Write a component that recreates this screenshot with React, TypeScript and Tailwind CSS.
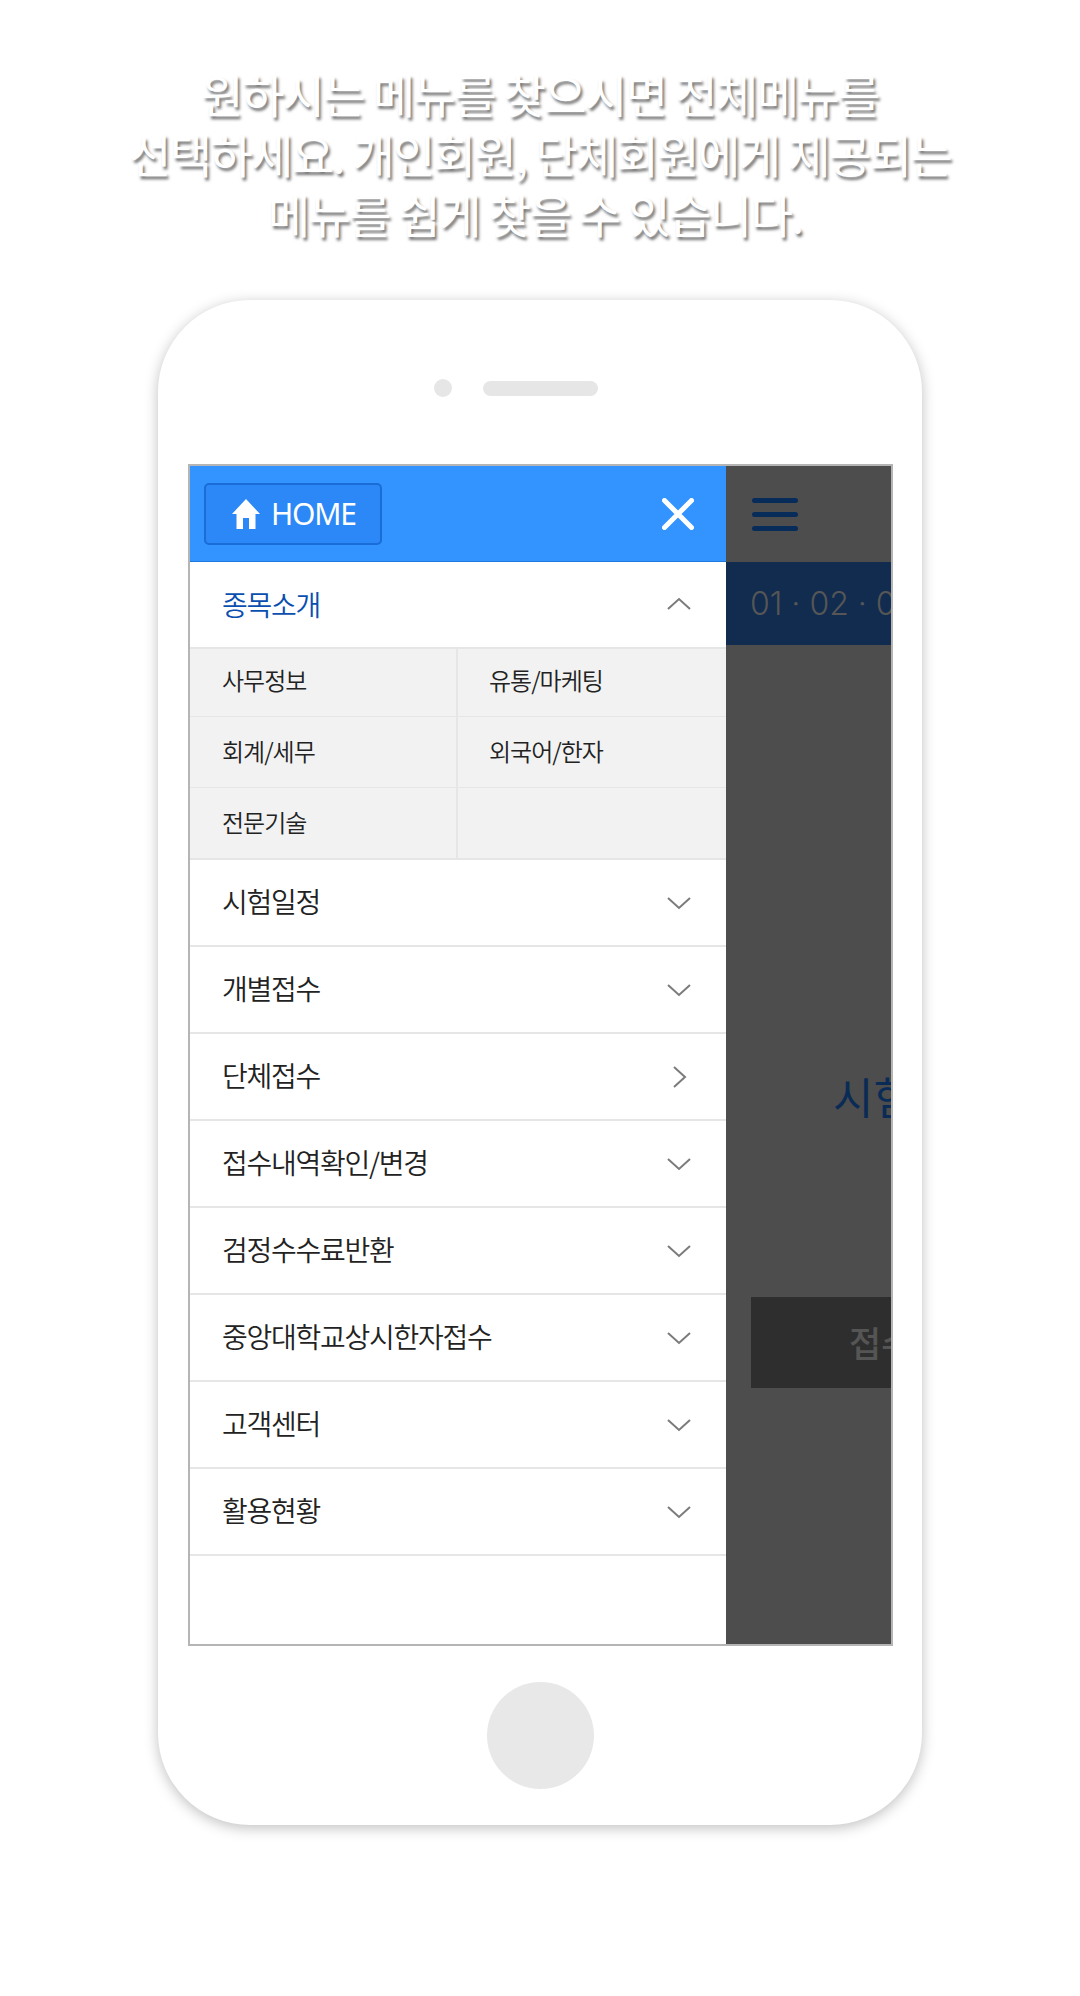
const FONT = "font-['Noto_Sans_CJK_KR','Noto_Sans',sans-serif]";

const MENU_ROWS = [
  { label: "시험일정", dir: "down" },
  { label: "개별접수", dir: "down" },
  { label: "단체접수", dir: "right" },
  { label: "접수내역확인/변경", dir: "down" },
  { label: "검정수수료반환", dir: "down" },
  { label: "중앙대학교상시한자접수", dir: "down" },
  { label: "고객센터", dir: "down" },
  { label: "활용현황", dir: "down" },
];

const SUB_ITEMS = ["사무정보", "유통/마케팅", "회계/세무", "외국어/한자", "전문기술", ""];

function Chevron({ dir }: { dir: string }) {
  const points = dir === "down" ? "1,1 12,11 23,1" : dir === "up" ? "1,11 12,1 23,11" : "7,-4 18,6 7,16";
  return (
    <svg width="24" height="12" viewBox="0 0 24 12" className="overflow-visible" fill="none" stroke="#7b7b7b" strokeWidth="2">
      <polyline points={points} />
    </svg>
  );
}

function HomeIcon() {
  return (
    <svg width="28" height="30" viewBox="0 0 28 30" fill="#fff">
      <path d="M14 0 L28 15 L23.5 15 L23.5 30 L17 30 L17 19 L11 19 L11 30 L4.5 30 L4.5 15 L0 15 Z" />
    </svg>
  );
}

function MenuRow({ label, dir }: { label: string; dir: string }) {
  return (
    <div className="flex h-[87px] items-center justify-between border-b-2 border-[#e6e6e6] pl-8 pr-[35px]">
      <span className="pb-[3px] text-[28px] font-[350] tracking-[-1.25px] text-[#222]">{label}</span>
      <Chevron dir={dir} />
    </div>
  );
}

function Menu() {
  return (
    <div className="flex w-[536px] shrink-0 flex-col bg-white">
      <div className="flex h-[96px] items-center justify-between border-b border-[#1f78dc] bg-[#3393ff] pl-[14px] pr-[32px]">
        <div className="flex h-[62px] w-[178px] items-center rounded-[5px] border-2 border-[#1a6cd6] bg-[#2b88f6] pl-[26px]">
          <HomeIcon />
          <span className="ml-[11px] font-['Noto_Sans',sans-serif] text-[30px] leading-none tracking-[-1.2px] text-white">HOME</span>
        </div>
        <svg width="32" height="32" viewBox="0 0 32 32" stroke="#fff" strokeWidth="5" strokeLinecap="round">
          <path d="M2.5 2.5 L29.5 29.5 M29.5 2.5 L2.5 29.5" />
        </svg>
      </div>
      <div className="flex h-[87px] items-center justify-between border-b-2 border-[#e6e6e6] pb-[2px] pl-8 pr-[35px]">
        <span className="text-[28px] font-[350] tracking-[-1.25px] text-[#0a4fb0]">종목소개</span>
        <Chevron dir="up" />
      </div>
      <div className="grid grid-cols-2 grid-rows-[68px_71px_70px] border-b-2 border-[#e6e6e6] bg-[#f2f2f2]">
        {SUB_ITEMS.map((item, i) => (
          <div
            key={i}
            className={`flex items-center text-[24px] font-[350] tracking-[-1px] text-[#222] ${i % 2 === 0 ? "border-r-2 border-[#e6e6e6] pl-8" : "pl-[31px]"} ${i < 4 ? "border-b border-[#e6e6e6]" : ""} ${i < 2 ? "pb-[5px]" : "pb-[3px]"}`}
          >
            {item}
          </div>
        ))}
      </div>
      {MENU_ROWS.map((row) => (
        <MenuRow key={row.label} label={row.label} dir={row.dir} />
      ))}
    </div>
  );
}

function BackPage() {
  return (
    <div className="flex min-w-0 flex-1 flex-col overflow-hidden bg-[#4d4d4d]">
      <div className="flex h-[96px] shrink-0 flex-col justify-center gap-[9px] pl-[26px]">
        <div className="h-[5px] w-[46px] rounded-full bg-[#082c5a]" />
        <div className="h-[5px] w-[46px] rounded-full bg-[#082c5a]" />
        <div className="h-[5px] w-[46px] rounded-full bg-[#082c5a]" />
      </div>
      <div className="flex h-[83px] shrink-0 items-center whitespace-nowrap bg-[#112c4f] pl-[24px] font-['Inter',sans-serif] text-[32px] font-light text-[#565656]">
        01 · 02 · 03
      </div>
      <div className="mt-[421px] whitespace-nowrap pl-[107px] text-[44px] leading-[60px] text-[#0a2b55]">시험일정</div>
      <div className="ml-[25px] mt-[171px] flex h-[91px] w-[400px] shrink-0 items-center whitespace-nowrap bg-[#2e2e2e] pl-[98px] text-[35px] font-medium text-[#555]">
        접수하기
      </div>
    </div>
  );
}

export default function App() {
  return (
    <div className={`min-h-[1996px] bg-white pt-[63px] ${FONT}`}>
      <div className="text-center text-[46px] leading-[60px] tracking-[-1.6px] text-white [text-shadow:2px_3px_3px_rgba(0,0,0,0.55)]">
        <p>원하시는 메뉴를 찾으시면 전체메뉴를</p>
        <p>선택하세요. 개인회원, 단체회원에게 제공되는</p>
        <p className="pr-[10px]">메뉴를 쉽게 찾을 수 있습니다.</p>
      </div>
      <div className="mx-auto mt-[57px] flex h-[1525px] w-[764px] flex-col rounded-[92px] bg-white pl-[30px] pr-[29px] pt-[79px] shadow-[0_3px_14px_rgba(0,0,0,0.25)]">
        <div className="flex items-center justify-center gap-[31px] pr-[49px]">
          <div className="size-[18px] rounded-full bg-[#e6e6e6]" />
          <div className="h-[15px] w-[115px] rounded-full bg-[#e6e6e6]" />
        </div>
        <div className="mt-[67px] flex h-[1182px] border-2 border-[#b5b5b5]">
          <Menu />
          <BackPage />
        </div>
        <div className="mx-auto mt-[36px] size-[107px] rounded-full bg-[#e8e8e8]" />
      </div>
    </div>
  );
}
